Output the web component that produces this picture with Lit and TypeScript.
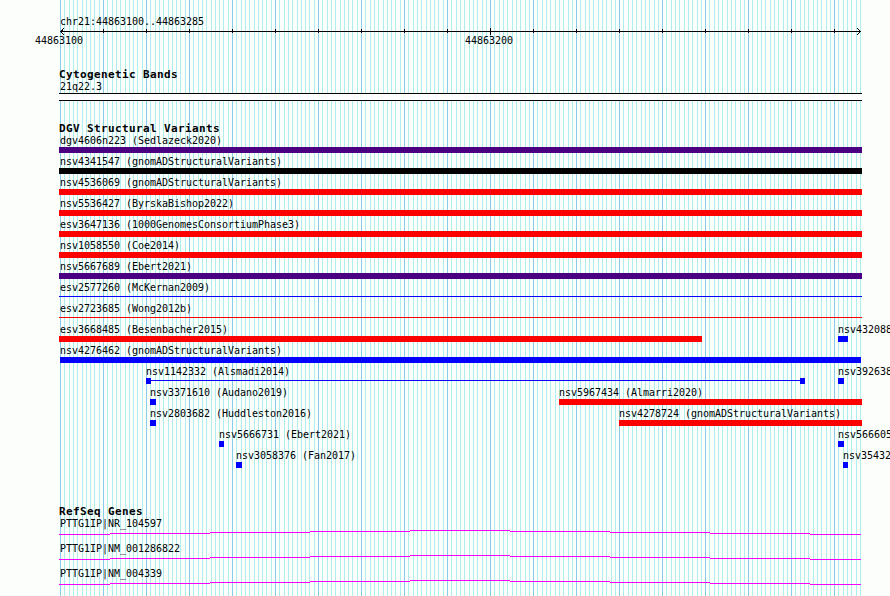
import { LitElement, html, svg, css } from "lit";
import { customElement, property } from "lit/decorators.js";

const LEFT = 59;
const RIGHT = 862;
const BASES = 186;
const PX_PER_BASE = 800 / BASES;

interface Feature {
  name: string;
  start: number;
  end: number;
  color: string;
  kind?: "bar" | "line" | "span";
}

const RED = "#ff0000";
const BLUE = "#0000ff";
const INDIGO = "#4b0082";

const full = (name: string, color: string, kind: Feature["kind"] = "bar"): Feature => ({
  name, start: LEFT, end: RIGHT, color, kind,
});

const VARIANTS: Feature[][] = [
  [full("dgv4606n223 (Sedlazeck2020)", INDIGO)],
  [full("nsv4341547 (gnomADStructuralVariants)", "#000000")],
  [full("nsv4536069 (gnomADStructuralVariants)", RED)],
  [full("nsv5536427 (ByrskaBishop2022)", RED)],
  [full("esv3647136 (1000GenomesConsortiumPhase3)", RED)],
  [full("nsv1058550 (Coe2014)", RED)],
  [full("nsv5667689 (Ebert2021)", INDIGO)],
  [full("esv2577260 (McKernan2009)", BLUE, "line")],
  [full("esv2723685 (Wong2012b)", RED, "line")],
  [
    { name: "esv3668485 (Besenbacher2015)", start: 59, end: 702, color: RED },
    { name: "nsv4320886", start: 838, end: 848, color: BLUE },
  ],
  [{ name: "nsv4276462 (gnomADStructuralVariants)", start: 60, end: 861, color: BLUE }],
  [
    { name: "nsv1142332 (Alsmadi2014)", start: 146, end: 805, color: BLUE, kind: "span" },
    { name: "nsv3926380", start: 838, end: 844, color: BLUE },
  ],
  [
    { name: "nsv3371610 (Audano2019)", start: 150, end: 156, color: BLUE },
    { name: "nsv5967434 (Almarri2020)", start: 559, end: 862, color: RED },
  ],
  [
    { name: "nsv2803682 (Huddleston2016)", start: 150, end: 156, color: BLUE },
    { name: "nsv4278724 (gnomADStructuralVariants)", start: 619, end: 862, color: RED },
  ],
  [
    { name: "nsv5666731 (Ebert2021)", start: 219, end: 224, color: BLUE },
    { name: "nsv5666050", start: 838, end: 844, color: BLUE },
  ],
  [
    { name: "nsv3058376 (Fan2017)", start: 236, end: 242, color: BLUE },
    { name: "nsv3543200", start: 843, end: 848, color: BLUE },
  ],
];

const GENES = ["PTTG1IP|NR_104597", "PTTG1IP|NM_001286822", "PTTG1IP|NM_004339"];

@customElement("grid-lines")
class GridLines extends LitElement {
  static styles = css`
    :host { display: block; }
    svg { display: block; }
    .minor { fill: #afeeee; }
    .major { fill: #87ceeb; }
  `;
  render() {
    const lines = [];
    for (let n = 0; n <= BASES; n++) {
      const x = Math.round(60 + n * PX_PER_BASE);
      lines.push(svg`<rect class=${n % 10 === 0 ? "major" : "minor"} x=${x} y="0" width="1" height="596"/>`);
    }
    return html`<svg width="890" height="596" shape-rendering="crispEdges">${lines}</svg>`;
  }
}

@customElement("scale-ruler")
class ScaleRuler extends LitElement {
  static styles = css`
    :host { display: block; height: 9px; }
    svg { display: block; }
    .ink { stroke: #000; fill: none; }
  `;
  render() {
    const ticks = [];
    for (let x = 103; x < 860; x += 43) {
      const big = x === 490;
      ticks.push(svg`<path class="ink" d="M${x + 0.5} ${big ? 1 : 2}V${big ? 8 : 6}"/>`);
    }
    return html`<svg width="890" height="9" shape-rendering="crispEdges">
      <path class="ink" d="M60 4.5H861"/>
      ${ticks}
      <path class="ink" d="M61 3.5h2M62 2.5h1M63 1.5h1M61 5.5h1M62 6.5h1M63 7.5h1"/>
      <path class="ink" d="M859 3.5h1M858 2.5h1M857 1.5h1M859 5.5h1M858 6.5h1M857 7.5h1"/>
    </svg>`;
  }
}

@customElement("variant-feature")
class VariantFeature extends LitElement {
  @property({ attribute: false }) feature!: Feature;
  static styles = css`
    :host { display: block; }
    .label { height: 12px; line-height: 14px; white-space: pre; }
    .label.inset { padding-left: 1px; }
    .glyph { height: 6px; margin-top: 1px; display: flex; align-items: flex-start; }
    .bar { height: 6px; width: 100%; }
    .line { height: 1px; flex: 1; margin-top: 2px; }
    .cap { width: 5px; height: 6px; }
  `;
  render() {
    const f = this.feature;
    const fill = `background:${f.color}`;
    const kind = f.kind ?? "bar";
    return html`
      <div class="label ${f.start === LEFT ? "inset" : ""}">${f.name}</div>
      <div class="glyph" style="width:${f.end - f.start}px">
        ${kind === "bar"
          ? html`<div class="bar" style=${fill}></div>`
          : kind === "line"
            ? html`<div class="line" style=${fill}></div>`
            : html`<div class="cap" style=${fill}></div><div class="line" style=${fill}></div><div class="cap" style=${fill}></div>`}
      </div>`;
  }
}

@customElement("gene-track")
class GeneTrack extends LitElement {
  @property() name = "";
  static styles = css`
    :host { display: block; height: 25px; padding-left: 59px; }
    .label { height: 12px; line-height: 14px; padding-left: 1px; }
    svg { display: block; }
    .intron { fill: #ff00ff; }
  `;
  render() {
    const xs = [59, 110, 210, 310, 410, 510, 610, 710, 810, 861];
    const ys = [4, 3, 2, 1, 0, 1, 2, 3, 4];
    return html`
      <div class="label">${this.name}</div>
      <svg width="803" height="8" shape-rendering="crispEdges">
        ${ys.map((y, i) => svg`<rect class="intron" x=${xs[i] - 59} y=${y + 1} width=${xs[i + 1] - xs[i]} height="1"/>`)}
      </svg>`;
  }
}

@customElement("app-root")
class AppRoot extends LitElement {
  static styles = css`
    :host {
      display: block; position: relative; width: 890px; height: 596px; overflow: hidden;
      background: #fcfefc; color: #000;
      font: 10px/12px "DejaVu Sans Mono", monospace; letter-spacing: -0.02px;
    }
    .backdrop { position: absolute; inset: 0; }
    .content { position: relative; display: flex; flex-direction: column; }
    .region { height: 12px; line-height: 14px; padding: 15px 0 0 60px; }
    .numbers { height: 12px; display: flex; padding-left: 35px; margin-top: -1px; }
    .number { flex: none; width: 430px; }
    h2 {
      margin: 0; height: 13px; padding-left: 59px;
      font: bold 11px/13px "DejaVu Sans Mono", monospace; letter-spacing: 0.378px;
    }
    .cyto { margin-top: 21px; }
    .band-name { height: 12px; line-height: 14px; padding-left: 60px; margin-top: -1px; }
    .band {
      height: 6px; width: 803px; margin: 1px 0 0 59px;
      border: solid #000; border-width: 1px 0; background: #fff;
    }
    .variants { margin-top: 21px; }
    .rows { margin-top: -1px; }
    .row { height: 21px; display: grid; grid-template-columns: 890px; }
    .feature { grid-area: 1 / 1; }
    .genes { margin-top: 35px; }
    .gene-rows { margin-top: -1px; }
  `;
  render() {
    return html`
      <grid-lines class="backdrop"></grid-lines>
      <div class="content">
        <div class="region">chr21:44863100..44863285</div>
        <scale-ruler></scale-ruler>
        <div class="numbers"><span class="number">44863100</span><span class="number">44863200</span></div>
        <section class="cyto">
          <h2>Cytogenetic Bands</h2>
          <div class="band-name">21q22.3</div>
          <div class="band"></div>
        </section>
        <section class="variants">
          <h2>DGV Structural Variants</h2>
          <div class="rows">
            ${VARIANTS.map((row) => html`<div class="row">${row.map((f) => html`
              <variant-feature class="feature" .feature=${f} style="margin-left:${f.start}px"></variant-feature>`)}</div>`)}
          </div>
        </section>
        <section class="genes">
          <h2>RefSeq Genes</h2>
          <div class="gene-rows">${GENES.map((g) => html`<gene-track name=${g}></gene-track>`)}</div>
        </section>
      </div>`;
  }
}
